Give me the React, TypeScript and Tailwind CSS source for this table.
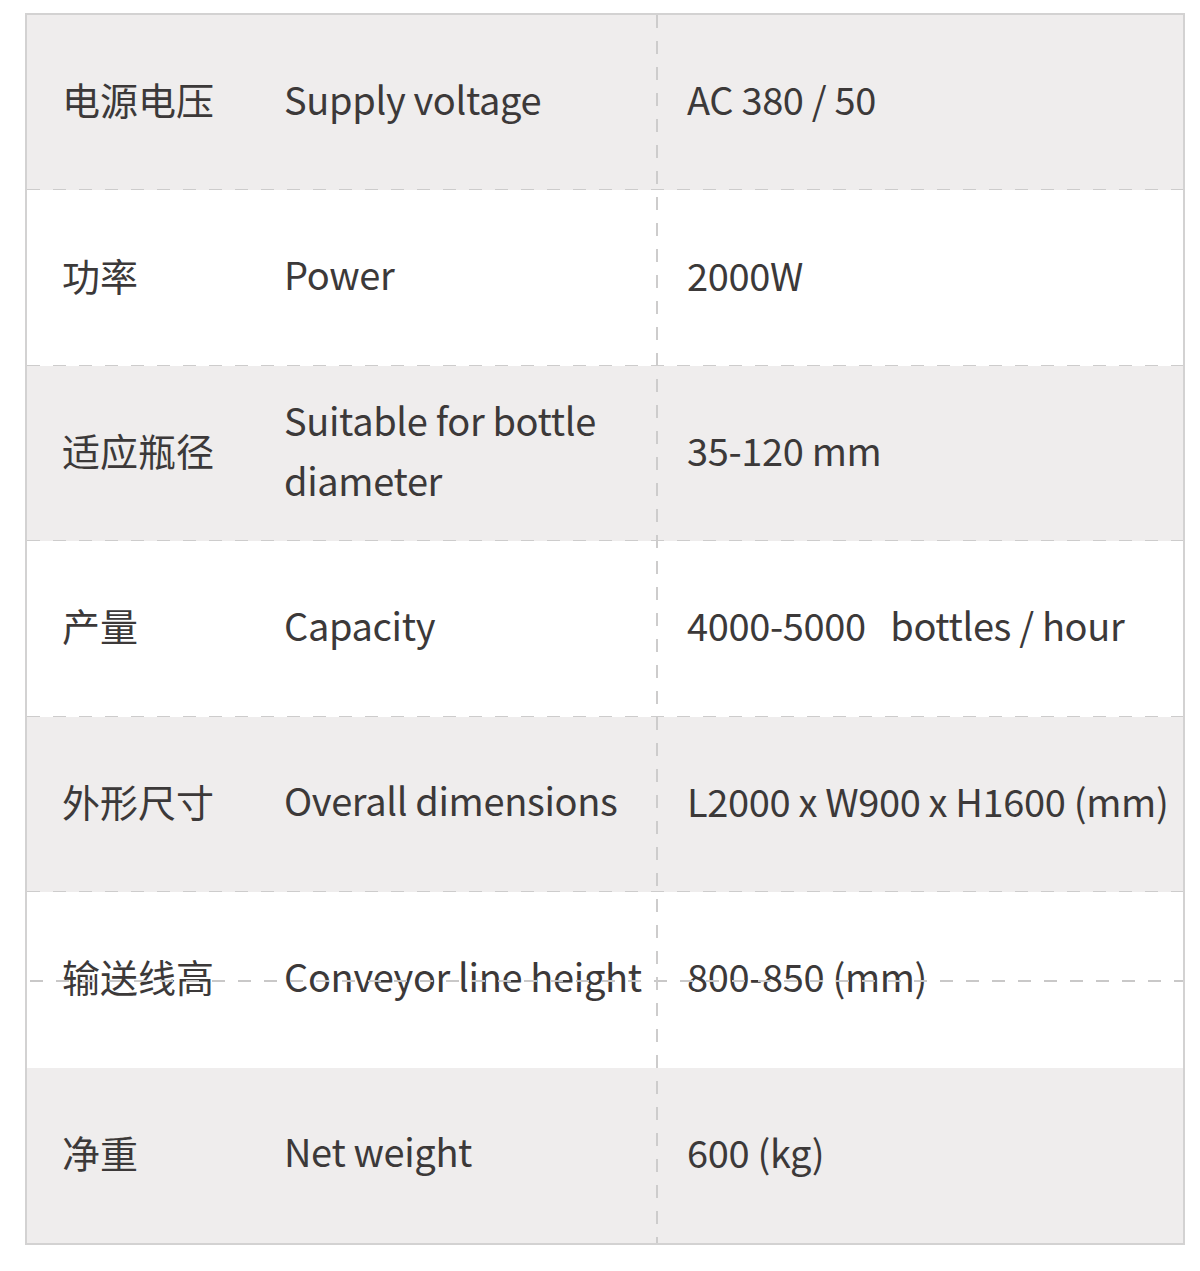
import React from "react";

const rows = [
  { zh: "电源电压", en: ["Supply voltage"], val: "AC 380 / 50", gray: true },
  { zh: "功率", en: ["Power"], val: "2000W", gray: false },
  { zh: "适应瓶径", en: ["Suitable for bottle", "diameter"], val: "35-120 mm", gray: true },
  { zh: "产量", en: ["Capacity"], val: "4000-5000   bottles / hour", gray: false },
  { zh: "外形尺寸", en: ["Overall dimensions"], val: "L2000 x W900 x H1600 (mm)", gray: true },
  { zh: "输送线高", en: ["Conveyor line height"], val: "800-850 (mm)", gray: false, strike: true },
  { zh: "净重", en: ["Net weight"], val: "600 (kg)", gray: true, last: true },
];

export default function App() {
  return (
    <div className="w-[1200px] h-[1271px] bg-white pt-[13px] pl-[25px]">
      <div
        className="relative w-[1160px] h-[1232px] border-2 border-[#d3d2d2] flex flex-col text-[38px] font-normal text-[#3c3939] tracking-[-0.35px]"
        style={{ fontFamily: '"Noto Sans CJK SC", "Noto Sans", sans-serif' }}
      >
        {rows.map((r, i) => (
          <div
            key={i}
            className={`relative flex-1 flex pb-[8px] ${r.gray ? "bg-[#efeded]" : "bg-white"}`}
          >
            <div className="w-[223px] pl-[35px] flex items-center tracking-normal">{r.zh}</div>
            <div className="w-[407px] pl-[34px] flex flex-col justify-center leading-[60px]">
              {r.en.map((l, j) => (
                <div key={j}>{l}</div>
              ))}
            </div>
            <div className="flex-1 pl-[30px] flex items-center whitespace-pre">{r.val}</div>
            {!r.last && !(i === 5) && (
              <div className="absolute left-0 right-0 bottom-[-1px] h-[2px] bg-[repeating-linear-gradient(to_right,#cdcccc_0px,#cdcccc_13px,transparent_13px,transparent_26px)]" />
            )}
            {r.strike && (
              <div className="absolute left-[3px] right-0 top-1/2 h-[2px] bg-[repeating-linear-gradient(to_right,#c9c8c8_0px,#c9c8c8_13px,transparent_13px,transparent_26px)]" />
            )}
          </div>
        ))}
        <div className="absolute top-0 bottom-0 left-[629px] w-[2px] bg-[repeating-linear-gradient(to_bottom,#cdcccc_0px,#cdcccc_13px,transparent_13px,transparent_26px)]" />
      </div>
    </div>
  );
}
